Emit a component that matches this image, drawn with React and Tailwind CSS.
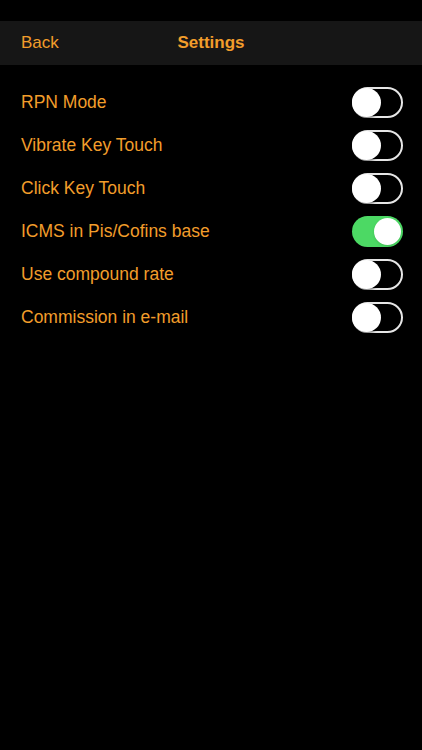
const rows = [
  { label: "RPN Mode", on: false },
  { label: "Vibrate Key Touch", on: false },
  { label: "Click Key Touch", on: false },
  { label: "ICMS in Pis/Cofins base", on: true },
  { label: "Use compound rate", on: false },
  { label: "Commission in e-mail", on: false },
];

const Toggle = ({ on }) => (
  <div
    className={
      on
        ? "w-[51px] h-[31px] rounded-full bg-[#4cd964] flex items-center justify-end p-[2px]"
        : "w-[51px] h-[31px] rounded-full border-2 border-[#e6e6e6] bg-black flex items-center justify-start"
    }
  >
    <div
      className={
        on
          ? "w-[27px] h-[27px] rounded-full bg-white shadow"
          : "w-[29px] h-[29px] -ml-[2px] rounded-full bg-white shadow-[1px_1px_2px_rgba(0,0,0,0.5)]"
      }
    />
  </div>
);

export default function App() {
  return (
    <div className="w-[422px] h-[750px] bg-black font-['Liberation_Sans',Arial,sans-serif] text-[#f29d2b]">
      {/* status bar */}
      <div className="h-[21px]" />

      {/* nav bar */}
      <div className="h-[44px] bg-[#161616] flex items-center relative">
        <span className="pl-[21px] text-[17px]">Back</span>
        <span className="absolute left-0 right-0 text-center text-[17px] font-bold pointer-events-none">
          Settings
        </span>
      </div>

      {/* settings list */}
      <div className="pt-[16px] pl-[21px] pr-[19px] flex flex-col">
        {rows.map((row, i) => (
          <div key={i} className="h-[43px] flex items-center justify-between">
            <span className="text-[17.5px]">{row.label}</span>
            <Toggle on={row.on} />
          </div>
        ))}
      </div>
    </div>
  );
}
